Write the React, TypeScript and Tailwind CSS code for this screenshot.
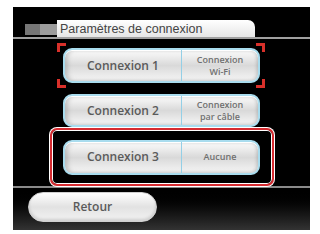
import React from "react";

const font = { fontFamily: '"Liberation Sans", Arial, sans-serif' };
const btnFont = { fontFamily: '"Open Sans", "Liberation Sans", Arial, sans-serif' };

function Bracket({ pos }: { pos: "tl" | "tr" | "bl" | "br" }) {
  const cls: Record<string, string> = {
    tl: "left-[-6px] top-[-5px] border-t-[3px] border-l-[3px]",
    tr: "right-[-5px] top-[-5px] border-t-[3px] border-r-[3px]",
    bl: "left-[-6px] bottom-[-5px] border-b-[3px] border-l-[3px]",
    br: "right-[-5px] bottom-[-5px] border-b-[3px] border-r-[3px]",
  };
  return <div className={`absolute w-[9px] h-[9px] border-[#d8302a] ${cls[pos]}`} />;
}

function ConnButton({ label, right, h }: { label: string; right: React.ReactNode; h: string }) {
  return (
    <div
      style={btnFont}
      className={`w-[197px] ${h} flex rounded-[9px] border-2 border-[#a9dcee] bg-gradient-to-b from-[#fdfdfd] via-[#d9d9d9] to-[#f6f6f6] shadow-[inset_0_1px_0_#ffffff,inset_3px_0_4px_rgba(120,120,120,0.35),inset_-2px_0_3px_rgba(120,120,120,0.25)]`}
    >
      <div className="w-[117px] flex items-center justify-center border-r border-[#94cfe6] text-[12px] font-semibold text-[#5a5a5a]">
        {label}
      </div>
      <div className="flex-1 flex flex-col items-center justify-center text-[9px] leading-[12px] font-semibold text-[#707070] text-center">
        {right}
      </div>
    </div>
  );
}

export default function App() {
  return (
    <div className="w-[320px] h-[234px] bg-white pt-[7px] pl-[13px] overflow-hidden" style={font}>
      <div className="w-[297px] h-[223px] bg-black flex flex-col">
        {/* header */}
        <div className="h-[30px] flex items-end pl-[12px]">
          <div className="flex mb-[2px]">
            <div className="w-[15px] h-[11px] bg-[#767676]" />
            <div className="w-[17px] h-[11px] bg-[#9c9c9c]" />
          </div>
          <div className="w-[198px] h-[17px] bg-gradient-to-b from-white to-[#e6e6e6] rounded-tr-[7px] pl-[3px] flex items-center text-[12.5px] text-[#444] leading-none pt-[1px]">
            Paramètres de connexion
          </div>
        </div>
        <div className="h-[2px] bg-[#a0a0a0]" />
        {/* middle */}
        <div className="h-[147px] flex flex-col items-center pt-[9px]">
          <div className="relative">
            <Bracket pos="tl" />
            <Bracket pos="tr" />
            <Bracket pos="bl" />
            <Bracket pos="br" />
            <ConnButton
              label="Connexion 1"
              h="h-[35px]"
              right={
                <>
                  <span>Connexion</span>
                  <span>Wi-Fi</span>
                </>
              }
            />
          </div>
          <div className="mt-[11px]">
            <ConnButton
              label="Connexion 2"
              h="h-[33px]"
              right={
                <>
                  <span>Connexion</span>
                  <span>par câble</span>
                </>
              }
            />
          </div>
          <div className="relative z-10 mt-[1px] w-[224px] h-[62px] rounded-[7px] border-2 border-[#d62b30] bg-black shadow-[0_0_0_1px_#ffffff,inset_0_0_0_1px_#ffffff] flex items-center justify-center">
            <ConnButton label="Connexion 3" h="h-[35px]" right={<span>Aucune</span>} />
          </div>
        </div>
        {/* footer */}
        <div className="flex-1 border-t-2 border-[#8a8a8a] bg-gradient-to-b from-black to-[#333] pl-[15px] pt-[4px]">
          <div
            style={btnFont}
            className="w-[129px] h-[30px] rounded-full border border-[#cfcfcf] bg-gradient-to-b from-white via-[#e2e2e2] to-[#f3f3f3] shadow-[inset_0_-2px_3px_rgba(0,0,0,0.15)] flex items-center justify-center text-[12px] font-semibold text-[#5a5a5a]"
          >
            Retour
          </div>
        </div>
      </div>
    </div>
  );
}
